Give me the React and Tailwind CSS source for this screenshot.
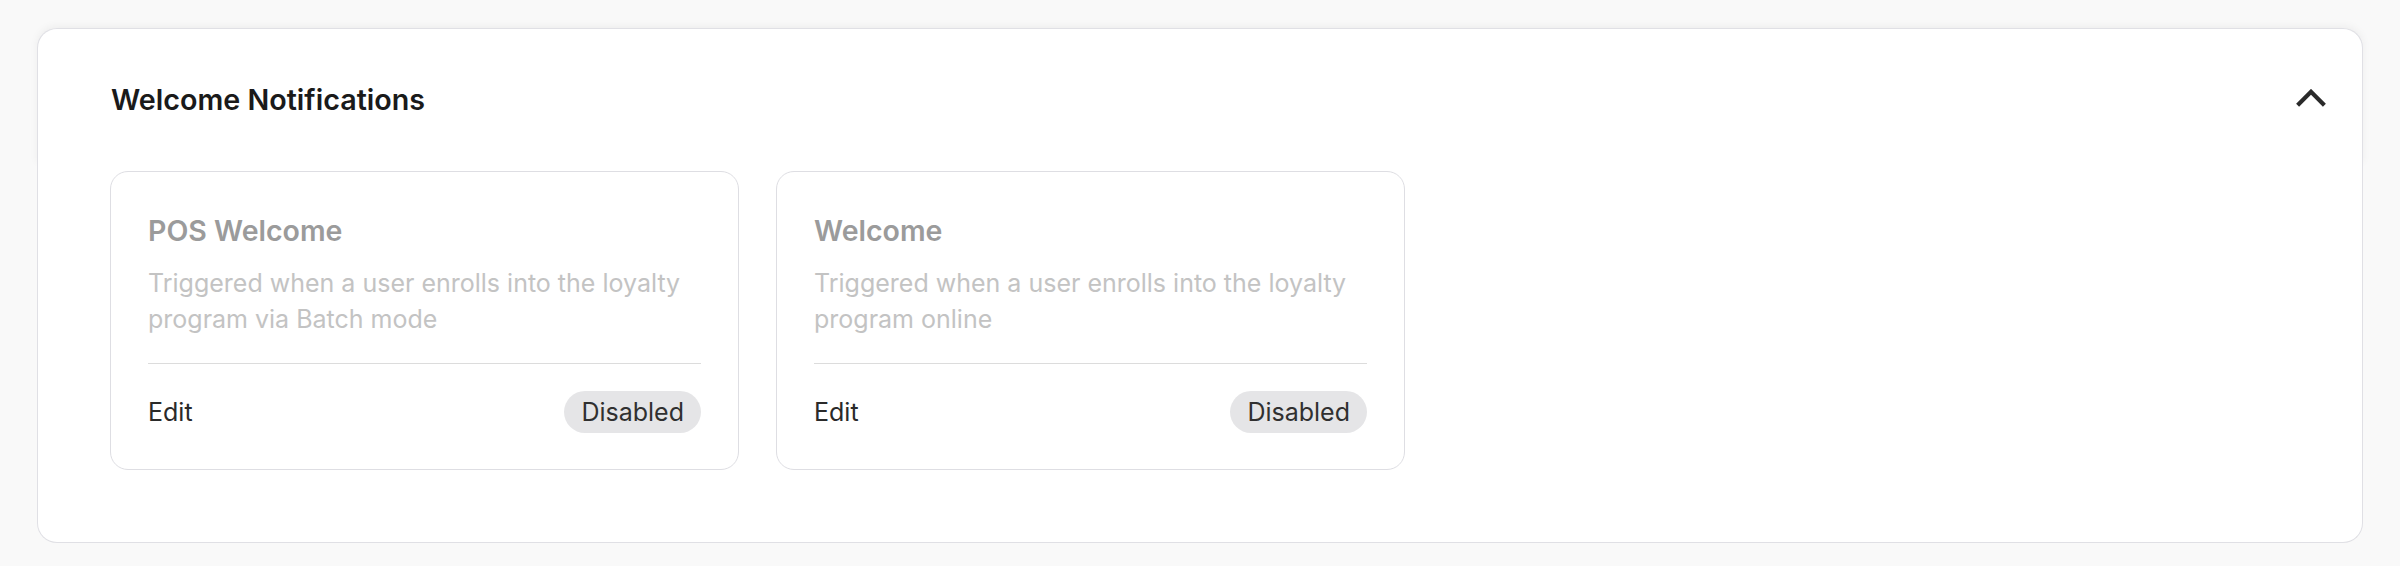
const notifications = [
  {
    id: 'pos-welcome',
    title: 'POS Welcome',
    description: 'Triggered when a user enrolls into the loyalty program via Batch mode',
    status: 'Disabled',
  },
  {
    id: 'welcome',
    title: 'Welcome',
    description: 'Triggered when a user enrolls into the loyalty program online',
    status: 'Disabled',
  },
];

function ChevronUp() {
  return (
    <svg width="30" height="18" viewBox="0 0 30 18" fill="none" aria-hidden="true">
      <polyline points="1.6,16.2 15,2.8 28.4,16.2" stroke="#2a2a2a" strokeWidth="4.2" strokeLinejoin="miter" />
    </svg>
  );
}

function NotificationCard({ item }) {
  return (
    <div className="flex w-[629px] flex-col rounded-[18px] border border-[#dedee3] bg-white px-[37px] pb-[36px] pt-[38px]">
      <h3 className="text-[28.5px] font-semibold leading-[42px] text-[#9b9b9b]">{item.title}</h3>
      <p className="mt-[13px] text-[25px] leading-[36px] text-[#c3c3c3]">{item.description}</p>
      <div className="mt-[26px] flex items-center justify-between border-t border-[#dcdcdc] pt-[27px]">
        <button type="button" className="text-[25px] leading-[36px] text-[#2a2a2a]">
          Edit
        </button>
        <span className="rounded-full bg-[#e5e5e7] px-[17px] py-[3px] text-[25px] leading-[36px] text-[#303030]">
          {item.status}
        </span>
      </div>
    </div>
  );
}

export default function App() {
  return (
    <div className="min-h-screen bg-[#f9f9f9] px-[37px] pb-[25px] pt-[28px] font-['Inter',sans-serif]">
      <section>
        <div className="flex h-[136px] items-center justify-between rounded-t-[20px] border-x border-t border-[#e0e0e5] bg-white pl-[73px] pr-[36px] pt-[6px] shadow-[0_-2px_8px_rgba(0,0,0,0.05)]">
          <h2 className="text-[28.7px] font-semibold leading-[42px] text-[#1a1a1a]">Welcome Notifications</h2>
          <button type="button" className="mb-[4px]">
            <ChevronUp />
          </button>
        </div>
        <div className="relative z-10 flex gap-[37px] rounded-b-[20px] border-x border-b border-[#e0e0e5] bg-white px-[72px] pb-[72px] pt-[7px]">
          {notifications.map((n) => (
            <NotificationCard key={n.id} item={n} />
          ))}
        </div>
      </section>
    </div>
  );
}
